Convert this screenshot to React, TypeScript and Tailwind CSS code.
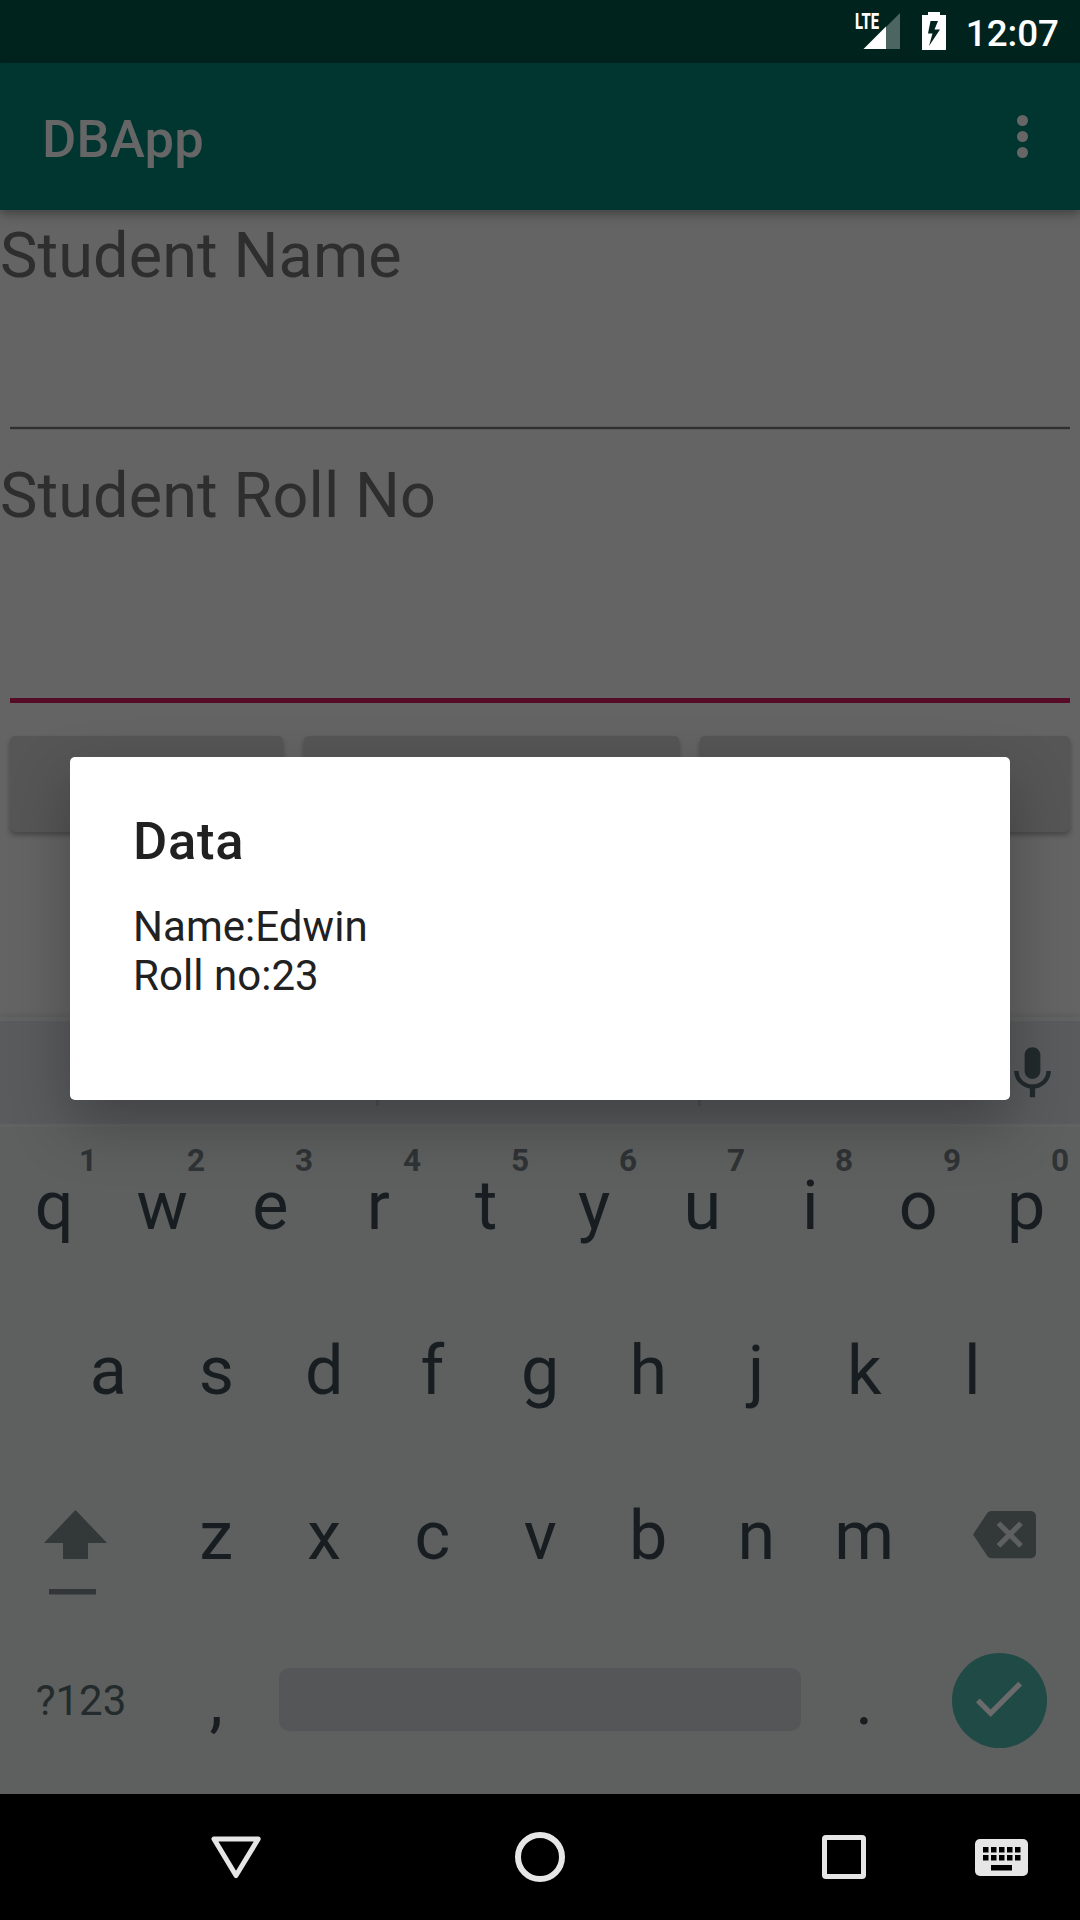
import type { ReactNode } from "react";

const topRow: [string, string][] = [
  ["q", "1"], ["w", "2"], ["e", "3"], ["r", "4"], ["t", "5"],
  ["y", "6"], ["u", "7"], ["i", "8"], ["o", "9"], ["p", "0"],
];
const middleRow = ["a", "s", "d", "f", "g", "h", "j", "k", "l"];
const bottomRow = ["z", "x", "c", "v", "b", "n", "m"];

function Key({ children, hint }: { children: ReactNode; hint?: string }) {
  return (
    <div className="relative flex h-[165px] w-[108px] items-center justify-center pb-[21px] pl-[0.5px] text-[68.25px] leading-[80px] text-[#171d20]">
      {children}
      {hint && (
        <span className="absolute top-[11px] right-[11px] text-[31.5px] leading-[32px] font-bold text-[#2f3336]">
          {hint}
        </span>
      )}
    </div>
  );
}

function StatusBar() {
  return (
    <header className="flex h-[63px] items-start justify-end bg-[#00231e] pr-[21px] text-white">
      <div className="relative mt-[12px] h-[38px] w-[46px]">
        <svg width="46" height="38" viewBox="0 0 46 38">
          <path d="M32 15L46 1V37H32Z" fill="#4d6561" />
          <path d="M9.500 37L32 14.500V37Z" fill="#fff" />
        </svg>
        <span className="absolute top-[-3px] left-[1px] origin-left scale-x-[0.66] text-[22.500px] leading-[24px] font-extrabold">LTE</span>
      </div>
      <svg className="mt-[12px] ml-[22px]" width="24" height="38" viewBox="0 0 24 38">
        <path fillRule="evenodd" fill="#fff" d="M6 0H18V3H24V38H0V3H6ZM8.500 9L6 21.500H10.500L7 34L18 17.500H12.500L16 9Z" />
      </svg>
      <span className="mt-[12px] ml-[20px] text-[36.75px] leading-[43px] font-medium">12:07</span>
    </header>
  );
}

function AppBar() {
  return (
    <div className="relative z-10 flex h-[147px] items-center justify-between bg-[#003530] pr-[52px] pl-[42px] shadow-[0_4px_10px_rgba(0,0,0,0.35)]">
      <h1 className="pt-[5px] text-[52.5px] leading-[62px] font-medium tracking-[0.25px] text-[#666666]">DBApp</h1>
      <div className="flex flex-col gap-[5px]">
        <i className="size-[11px] rounded-full bg-[#666666]" />
        <i className="size-[11px] rounded-full bg-[#666666]" />
        <i className="size-[11px] rounded-full bg-[#666666]" />
      </div>
    </div>
  );
}

function Form() {
  return (
    <main className="flex h-[807px] flex-col bg-[#646464]">
      <label className="h-[216px] pt-[9px] text-[63px] leading-[74px] tracking-[0.1px] text-[#2e2e2e]">Student Name</label>
      <div className="mx-[10px] h-[4px] border-y border-[#5a5a5a] bg-[#2f2f2f]" />
      <label className="h-[268px] pt-[29px] text-[63px] leading-[74px] tracking-[0.1px] text-[#2e2e2e]">Student Roll No</label>
      <div className="mx-[10px] h-[5px] bg-[#560b26]" />
      <div className="mx-[10px] mt-[33px] grid h-[96px] grid-cols-[273px_375px_370px] gap-[21px]">
        <button className="rounded-[5px] bg-[#565656] shadow-[0_3px_5px_rgba(0,0,0,0.3)]" />
        <button className="rounded-[5px] bg-[#565656] shadow-[0_3px_5px_rgba(0,0,0,0.3)]" />
        <button className="rounded-[5px] bg-[#565656] shadow-[0_3px_5px_rgba(0,0,0,0.3)]" />
      </div>
    </main>
  );
}

function Keyboard() {
  return (
    <section className="flex h-[777px] flex-col bg-[#5e605f]">
      <div className="h-[4px] bg-[#616262] shadow-[0_-2px_5px_rgba(0,0,0,0.1)]" />
      <div className="flex h-[103px] bg-[#5a5b5d] pb-[18px]">
        <div className="w-[379px] border-r-[3px] border-[#505153]" />
        <div className="w-[322px] border-r-[3px] border-[#505153]" />
        <svg className="mt-[21px] ml-[299.500px] shrink-0" width="63" height="63" viewBox="0 0 24 24" fill="#222a2c">
          <path d="M12 14c1.660 0 2.990-1.340 2.990-3L15 5c0-1.660-1.340-3-3-3S9 3.340 9 5v6c0 1.660 1.340 3 3 3zm5.300-3c0 3-2.540 5.100-5.300 5.100S6.700 14 6.700 11H5c0 3.410 2.720 6.230 6 6.720V21h2v-3.280c3.280-.48 6-3.300 6-6.720h-1.700z" />
        </svg>
      </div>
      <div className="mb-[7px] h-[3px] bg-[#616362]" />
      <div className="flex">
        {topRow.map(([letter, hint]) => (
          <Key key={letter} hint={hint}>{letter}</Key>
        ))}
      </div>
      <div className="flex justify-center">
        {middleRow.map((letter) => (
          <Key key={letter}>{letter}</Key>
        ))}
      </div>
      <div className="flex">
        <div className="w-[162px] pt-[46px] pl-[44px]">
          <svg width="63" height="86" viewBox="0 0 63 86">
            <path d="M31.500 0L63 33H44V49H19V33H0Z" fill="#323938" />
            <path d="M5 79H52V84.500H5Z" fill="#323639" />
          </svg>
        </div>
        {bottomRow.map((letter) => (
          <Key key={letter}>{letter}</Key>
        ))}
        <svg className="mt-[39px] ml-[55px]" width="63" height="63" viewBox="0 0 24 24" fill="#323938">
          <path d="M22 3H7c-.69 0-1.230.35-1.590.88L0 12l5.410 8.110c.36.53.9.89 1.590.89h15c1.100 0 2-.9 2-2V5c0-1.100-.9-2-2-2zm-3 12.590L17.590 17 14 13.410 10.410 17 9 15.590 12.590 12 9 8.410 10.410 7 14 10.590 17.590 7 19 8.410 15.410 12 19 15.590z" />
        </svg>
      </div>
      <div className="flex">
        <div className="flex h-[165px] w-[162px] items-center justify-center pb-[22px] text-[42px] leading-[50px] text-[#232b2c]">
          ?123
        </div>
        <Key>,</Key>
        <div className="mt-[39px] mr-[9px] ml-[9px] h-[63px] w-[522px] rounded-[10px] bg-[#555658]" />
        <Key>.</Key>
        <div className="mt-[23.500px] ml-[33.500px] flex size-[95px] items-center justify-center rounded-full bg-[#1f4a46]">
          <svg className="mr-[1px] mb-[3px]" width="63" height="63" viewBox="0 0 24 24" fill="#6b6b6b">
            <path d="M9 16.170L4.830 12l-1.420 1.410L9 19 21 7l-1.410-1.410z" />
          </svg>
        </div>
      </div>
    </section>
  );
}

function NavBar() {
  return (
    <nav className="flex h-[126px] bg-black">
      <svg className="mt-[41px] ml-[210px]" width="52" height="44" viewBox="0 0 52 44">
        <path d="M4 4H48.200L26 40.500Z" fill="none" stroke="#e6e6e6" strokeWidth="5" strokeLinejoin="round" />
      </svg>
      <div className="mt-[38px] ml-[253px] size-[50px] rounded-full border-6 border-[#e6e6e6]" />
      <div className="mt-[41px] ml-[257px] size-[44px] rounded-[4px] border-5 border-[#e6e6e6]" />
      <svg className="mt-[45px] ml-[109px]" width="53" height="37" viewBox="0 0 53 37">
        <rect width="53" height="37" rx="5" fill="#e6e6e6" />
        {[8, 16, 24, 32, 40].map((x) => (
          <path key={x} d={`M${x} 8h5.500v5.500h-5.500zM${x} 16h5.500v5.500h-5.500z`} />
        ))}
        <path d="M16 26h21v5.500h-21z" />
      </svg>
    </nav>
  );
}

export default function App() {
  return (
    <div className="relative h-[1920px] w-[1080px] overflow-hidden bg-black font-['Roboto',sans-serif]">
      <StatusBar />
      <AppBar />
      <Form />
      <Keyboard />
      <NavBar />
      <div
        role="dialog"
        className="absolute top-[757px] left-[70px] z-20 h-[343px] w-[940px] rounded-[5px] bg-white px-[63px] pt-[53px] text-[#212121] shadow-[0_24px_60px_rgba(0,0,0,0.28)]"
      >
        <h2 className="text-[52.5px] leading-[62px] font-medium tracking-[0.7px]">Data</h2>
        <p className="mt-[30px] text-[42px] leading-[49px] tracking-[0.05px]">
          Name:Edwin
          <br />
          Roll no:23
        </p>
      </div>
    </div>
  );
}
